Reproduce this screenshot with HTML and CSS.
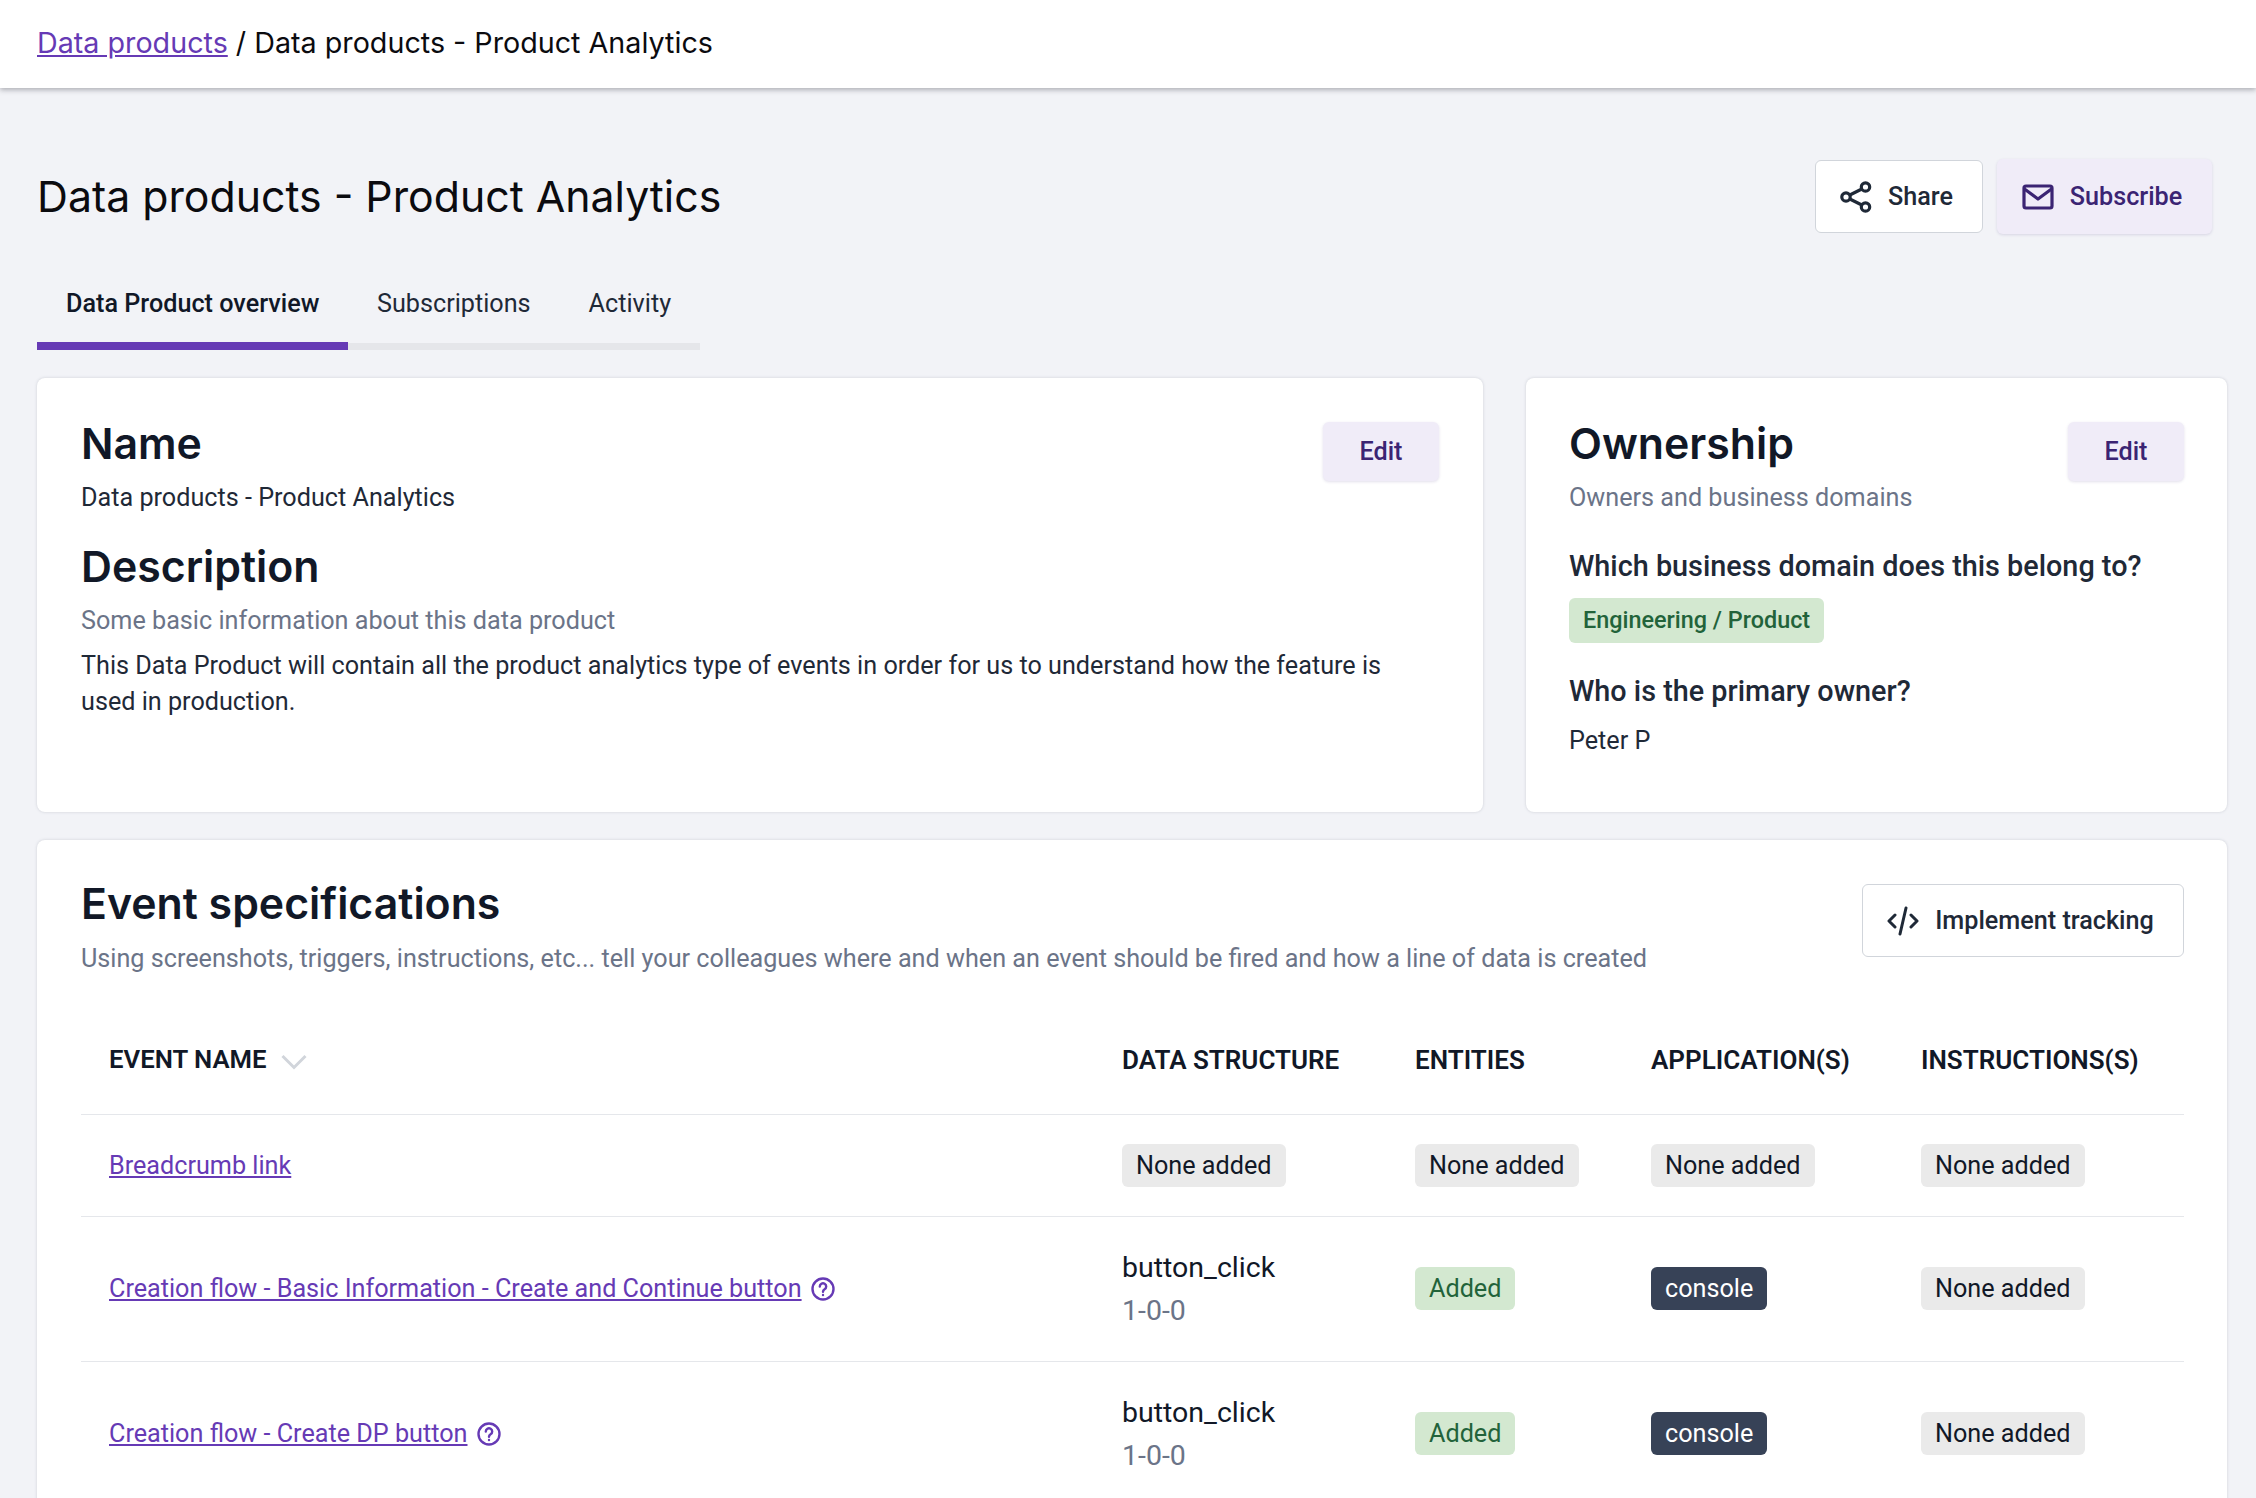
FILE: index.html
```html
<!DOCTYPE html>
<html lang="en">
<head>
  <meta charset="UTF-8">
  <title>Data products - Product Analytics</title>
  <link rel="stylesheet" href="styles.css">
</head>
<body>

  <div class="topbar">
    <a href="#" class="crumb">Data products</a> / Data products - Product Analytics
  </div>

  <div class="page">
    <div class="title-row">
      <h1>Data products - Product Analytics</h1>
      <div class="title-actions">
        <a href="#" class="btn btn-white">
          <svg class="icon" viewBox="0 0 32 32" fill="none" stroke="#1f2937" stroke-width="3.200"><circle cx="6" cy="16" r="4.200"/><circle cx="25.500" cy="6" r="4.200"/><circle cx="25.500" cy="26" r="4.200"/><path d="M9.800 14 21.800 8M9.800 18l12 6"/></svg>
          Share
        </a>
        <a href="#" class="btn btn-purple btn-big">
          <svg class="icon" viewBox="0 0 32 32" fill="none" stroke="#3b2473" stroke-width="3.200" stroke-linejoin="round"><rect x="2" y="5" width="28" height="22" rx="2"/><path d="M2.500 8 16 18 29.500 8"/></svg>
          Subscribe
        </a>
      </div>
    </div>

    <div class="tabs">
      <a href="#" class="tab active">Data Product overview</a>
      <a href="#" class="tab">Subscriptions</a>
      <a href="#" class="tab">Activity</a>
    </div>

    <div class="card-row">
      <div class="card card-main">
        <div class="card-head">
          <div>
            <h2>Name</h2>
            <p class="text">Data products - Product Analytics</p>
          </div>
          <a href="#" class="btn btn-purple btn-edit">Edit</a>
        </div>
        <h2 class="h2-next">Description</h2>
        <p class="muted">Some basic information about this data product</p>
        <p class="text para">This Data Product will contain all the product analytics type of events in order for us to understand how the feature is used in production.</p>
      </div>

      <div class="card card-side">
        <div class="card-head">
          <div>
            <h2>Ownership</h2>
            <p class="muted">Owners and business domains</p>
          </div>
          <a href="#" class="btn btn-purple btn-edit">Edit</a>
        </div>
        <h3>Which business domain does this belong to?</h3>
        <span class="tag tag-green tag-bold">Engineering / Product</span>
        <h3 class="h3-next">Who is the primary owner?</h3>
        <p class="text owner">Peter P</p>
      </div>
    </div>

    <div class="card card-events">
      <div class="card-head">
        <div>
          <h2>Event specifications</h2>
          <p class="muted">Using screenshots, triggers, instructions, etc... tell your colleagues where and when an event should be fired and how a line of data is created</p>
        </div>
        <a href="#" class="btn btn-white btn-impl">
          <svg class="icon" viewBox="0 0 32 32" fill="none" stroke="#1f2937" stroke-width="3" stroke-linecap="round" stroke-linejoin="round"><path d="M8 10 2 16l6 6M24 10l6 6-6 6M19 3l-6 26"/></svg>
          Implement tracking
        </a>
      </div>

      <table class="events">
        <colgroup>
          <col class="col-name"><col class="col-struct"><col class="col-ent"><col class="col-app"><col class="col-ins">
        </colgroup>
        <thead>
          <tr>
            <th class="th-name">EVENT NAME
              <svg class="chev" viewBox="0 0 26 16" fill="none" stroke="#d1d5db" stroke-width="3"><path d="M1.500 2 13 13.500 24.500 2"/></svg>
            </th>
            <th>DATA STRUCTURE</th>
            <th>ENTITIES</th>
            <th>APPLICATION(S)</th>
            <th>INSTRUCTIONS(S)</th>
          </tr>
        </thead>
        <tbody>
          <tr class="row-short">
            <td class="td-name"><a href="#" class="link">Breadcrumb link</a></td>
            <td><span class="tag tag-none">None added</span></td>
            <td><span class="tag tag-none">None added</span></td>
            <td><span class="tag tag-none">None added</span></td>
            <td><span class="tag tag-none">None added</span></td>
          </tr>
          <tr>
            <td class="td-name"><a href="#" class="link">Creation flow - Basic Information - Create and Continue button</a>
              <svg class="help" viewBox="0 0 24 24" fill="none" stroke="#663ab5" stroke-width="2.400" stroke-linecap="round"><circle cx="12" cy="12" r="10.500"/><path d="M8.800 9.500a3.200 3.200 0 1 1 4.800 2.800c-1 .6-1.600 1.200-1.600 2.400"/><path d="M12 18v.1"/></svg>
            </td>
            <td><div class="struct">button_click</div><div class="version">1-0-0</div></td>
            <td><span class="tag tag-green">Added</span></td>
            <td><span class="tag tag-dark">console</span></td>
            <td><span class="tag tag-none">None added</span></td>
          </tr>
          <tr>
            <td class="td-name"><a href="#" class="link">Creation flow - Create DP button</a>
              <svg class="help" viewBox="0 0 24 24" fill="none" stroke="#663ab5" stroke-width="2.400" stroke-linecap="round"><circle cx="12" cy="12" r="10.500"/><path d="M8.800 9.500a3.200 3.200 0 1 1 4.800 2.800c-1 .6-1.600 1.200-1.600 2.400"/><path d="M12 18v.1"/></svg>
            </td>
            <td><div class="struct">button_click</div><div class="version">1-0-0</div></td>
            <td><span class="tag tag-green">Added</span></td>
            <td><span class="tag tag-dark">console</span></td>
            <td><span class="tag tag-none">None added</span></td>
          </tr>
        </tbody>
      </table>
    </div>
  </div>

</body>
</html>
```

FILE: styles.css
```css
*{
  margin: 0;
  padding: 0;
  box-sizing: border-box;
}
html, body{
  height: 100%;
  overflow: hidden;
}
body{
  background: #f2f3f7;
  font-family: "Roboto", "Liberation Sans", sans-serif;
  font-size: 25.2px;
  color: #1f2937;
}
a{
  text-decoration: none;
}
.topbar{
  height: 88px;
  padding-left: 37px;
  background: white;
  box-shadow: 0 2px 5px rgba(90, 92, 100, 0.45);
  font-family: "Inter", sans-serif;
  font-size: 28.7px;
  line-height: 86px;
  color: #0b0b0f;
}
.crumb{
  color: #663ab5;
  text-decoration: underline;
}
.page{
  padding: 0 29px 0 37px;
}
.title-row{
  display: flex;
  justify-content: space-between;
  align-items: center;
  padding-top: 71px;
  padding-right: 15px;
  height: 146px;
}
h1{
  font-family: "Inter", sans-serif;
  font-size: 42.8px;
  font-weight: 400;
  color: #0b0b0f;
}
.title-actions{
  display: flex;
  align-items: center;
  gap: 14px;
}
.btn{
  display: flex;
  align-items: center;
  justify-content: center;
  border-radius: 6px;
  font-weight: 500;
}
.btn-white{
  width: 168px;
  height: 73px;
  gap: 16px;
  padding-right: 5px;
  background: white;
  border: 1px solid #d1d5db;
  color: #1f2937;
}
.btn-purple{
  background: #f0ecf8;
  color: #3b2473;
  box-shadow: 0 1px 3px rgba(60, 40, 120, 0.15);
}
.btn-big{
  width: 215px;
  height: 75px;
  gap: 16px;
  padding-right: 5px;
}
.btn-edit{
  width: 116px;
  height: 59px;
  flex-shrink: 0;
}
.btn-impl{
  width: 322px;
  flex-shrink: 0;
}
.icon{
  width: 32px;
  height: 32px;
  flex-shrink: 0;
}
.tabs{
  display: flex;
  width: 663px;
  margin-top: 36px;
  border-bottom: 7px solid #e5e6ea;
}
.tab{
  flex-shrink: 0;
  padding: 0 29px;
  height: 73px;
  margin-bottom: -7px;
  line-height: 68px;
  white-space: nowrap;
  color: #1f2937;
}
.tab.active{
  height: 80px;
  width: 311px;
  border-bottom: 8px solid #663ab5;
  font-weight: 500;
  color: #111827;
}
.card-row{
  display: flex;
  gap: 43px;
  margin-top: 28px;
}
.card{
  background: white;
  border-radius: 8px;
  box-shadow: 0 0 3px rgba(90, 95, 115, 0.25);
  padding: 44px;
}
.card-main{
  width: 1446px;
  height: 434px;
}
.card-side{
  flex: 1;
  padding-left: 43px;
  padding-right: 43px;
}
.card-head{
  display: flex;
  justify-content: space-between;
  align-items: flex-start;
}
h2{
  font-family: "Inter", sans-serif;
  font-size: 42.8px;
  line-height: 44px;
  font-weight: 600;
  color: #111827;
}
.h2-next{
  margin-top: 29px;
}
.text{
  line-height: 36px;
}
.card-head .text, .card-head .muted{
  margin-top: 14px;
}
.muted{
  line-height: 36px;
  color: #6b7488;
}
.h2-next + .muted{
  margin-top: 14px;
}
.para{
  margin-top: 9px;
  padding-right: 40px;
}
h3{
  font-size: 28.8px;
  line-height: 36px;
  font-weight: 500;
  margin-top: 32px;
  margin-bottom: 14px;
}
.h3-next{
  margin-top: 30px;
}
.owner{
  margin-top: 14px;
}
.tag{
  display: inline-block;
  height: 43px;
  padding: 0 14px;
  border-radius: 6px;
  line-height: 43px;
}
.tag-green{
  background: #d3e8d0;
  color: #22633a;
}
.tag-bold{
  font-size: 23.4px;
  font-weight: 500;
  height: 45px;
  line-height: 45px;
}
.tag-none{
  background: #eaeaea;
  color: #111827;
}
.tag-dark{
  background: #374257;
  color: white;
}
.card-events{
  margin-top: 28px;
  padding-right: 43px;
}
.card-events h2{
  margin-top: -2px;
}
.card-events .card-head .muted{
  margin-top: 15px;
}
.events{
  width: 100%;
  margin-top: 28px;
  table-layout: fixed;
  border-collapse: collapse;
}
.col-name{ width: 1041px; }
.col-struct{ width: 293px; }
.col-ent{ width: 236px; }
.col-app{ width: 270px; }
.events th{
  height: 109px;
  text-align: left;
  font-weight: 600;
  font-size: 26px;
  padding-top: 2px;
  color: #111827;
}
.events th.th-name{
  padding-left: 28px;
  padding-top: 0;
  font-size: 25.7px;
}
.chev{
  width: 26px;
  height: 16px;
  margin-left: 8px;
  vertical-align: -2px;
}
.events tbody td{
  height: 145px;
  border-top: 1px solid #e5e7eb;
  vertical-align: middle;
}
.events tbody .row-short td{
  height: 102px;
}
.events .td-name{
  padding-left: 28px;
}
.link{
  color: #663ab5;
  text-decoration: underline;
}
.help{
  width: 24px;
  height: 24px;
  margin-left: 3px;
  vertical-align: -4px;
}
.struct{
  font-size: 28.5px;
  line-height: 43px;
  color: #111827;
}
.version{
  font-size: 28.5px;
  line-height: 43px;
  color: #6b7488;
}
```
